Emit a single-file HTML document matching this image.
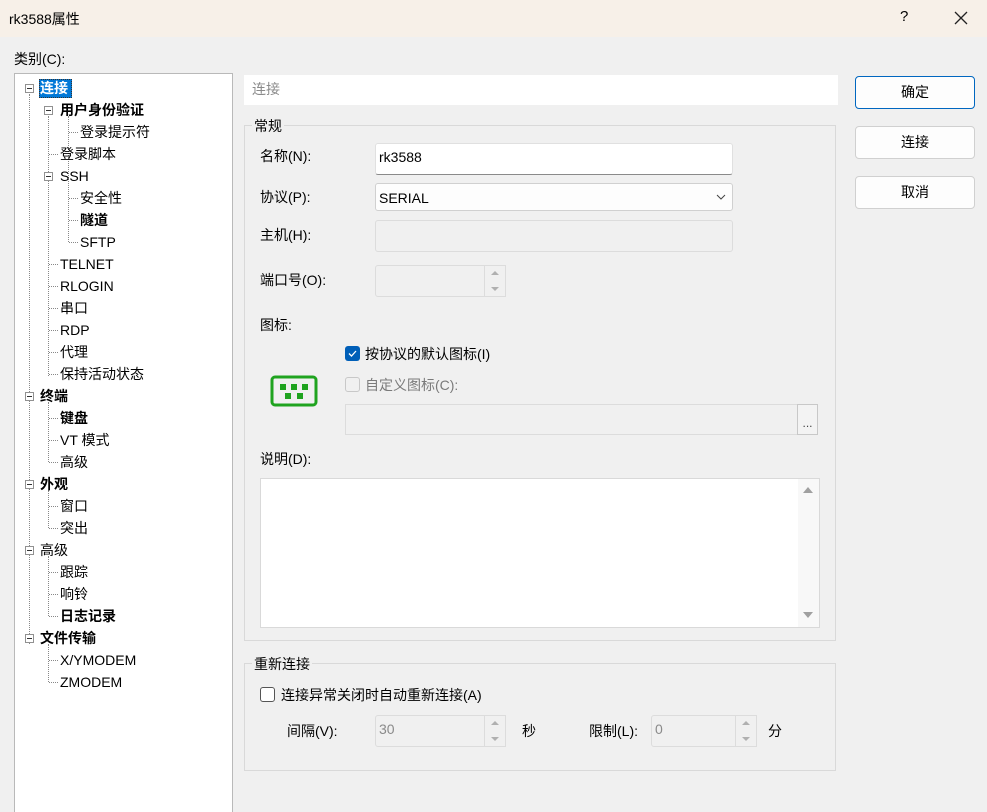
<!DOCTYPE html>
<html><head><meta charset="utf-8"><style>
*{margin:0;padding:0;box-sizing:border-box}
body{width:987px;height:812px;background:#f0f0f0;font-family:"Liberation Sans","Noto Sans CJK SC",sans-serif;font-size:14px;color:#000;position:relative;overflow:hidden}
.a{position:absolute;white-space:nowrap}
.t{position:absolute;line-height:20px;white-space:nowrap}
.b{font-weight:bold}
.box{position:absolute;border:1px solid #d9d9d9}
.pm{position:absolute;width:9px;height:9px;border:1px solid #919191;background:#fff}
.pm:after{content:"";position:absolute;left:1px;top:3px;width:5px;height:1px;background:#333}
.vd{position:absolute;border-left:1px dotted #888;width:0}
.hd{position:absolute;border-top:1px dotted #888;height:0;width:9px}
.btn{position:absolute;left:855px;width:120px;height:33px;background:#fdfdfd;border:1px solid #d0d0d0;border-radius:4px;text-align:center;line-height:31px}
.inp{position:absolute;background:#fff;border:1px solid #e0e0e0;border-bottom:1px solid #8a8a8a;border-radius:3px}
.dis{position:absolute;background:#f0f0f0;border:1px solid #dcdcdc;border-radius:3px}
.gray{color:#6d6d6d}
</style></head><body>
<div class="a" style="left:0;top:0;width:987px;height:37px;background:#f7f0e8"></div>
<div class="a" style="left:9px;top:9px;font-size:14px">rk3588属性</div>
<div class="a" style="left:900px;top:8px;font-size:15px">?</div>
<svg class="a" style="left:954px;top:11px" width="14" height="14"><path d="M1 1L13 13M13 1L1 13" stroke="#222" stroke-width="1.3"/></svg>
<div class="a" style="left:14px;top:49px">类别(C):</div>

<div class="a" style="left:14px;top:73px;width:219px;height:739px;background:#fff;border:1px solid #b9b9b9;border-bottom:none"></div>
<div class="vd" style="left:29px;top:94px;height:550px"></div>
<div class="vd" style="left:48px;top:116px;height:260px"></div>
<div class="vd" style="left:68px;top:116px;height:126px"></div>
<div class="vd" style="left:48px;top:402px;height:60px"></div>
<div class="vd" style="left:48px;top:490px;height:38px"></div>
<div class="vd" style="left:48px;top:556px;height:60px"></div>
<div class="vd" style="left:48px;top:644px;height:38px"></div>
<div class="hd" style="left:69px;top:132px"></div>
<div class="hd" style="left:69px;top:198px"></div>
<div class="hd" style="left:69px;top:220px"></div>
<div class="hd" style="left:69px;top:242px"></div>
<div class="hd" style="left:49px;top:154px"></div>
<div class="hd" style="left:49px;top:264px"></div>
<div class="hd" style="left:49px;top:286px"></div>
<div class="hd" style="left:49px;top:308px"></div>
<div class="hd" style="left:49px;top:330px"></div>
<div class="hd" style="left:49px;top:352px"></div>
<div class="hd" style="left:49px;top:374px"></div>
<div class="hd" style="left:49px;top:418px"></div>
<div class="hd" style="left:49px;top:440px"></div>
<div class="hd" style="left:49px;top:462px"></div>
<div class="hd" style="left:49px;top:506px"></div>
<div class="hd" style="left:49px;top:528px"></div>
<div class="hd" style="left:49px;top:572px"></div>
<div class="hd" style="left:49px;top:594px"></div>
<div class="hd" style="left:49px;top:616px"></div>
<div class="hd" style="left:49px;top:660px"></div>
<div class="hd" style="left:49px;top:682px"></div>
<div class="pm" style="left:25px;top:84px"></div>
<div class="pm" style="left:44px;top:106px"></div>
<div class="pm" style="left:44px;top:172px"></div>
<div class="pm" style="left:25px;top:392px"></div>
<div class="pm" style="left:25px;top:480px"></div>
<div class="pm" style="left:25px;top:546px"></div>
<div class="pm" style="left:25px;top:634px"></div>
<div class="a" style="left:39px;top:79px;width:33px;height:19px;background:#0078d7;border:1px dotted #333"></div>
<div class="t b" style="left:40px;top:78px;color:#fff">连接</div>
<div class="t b" style="left:60px;top:100px">用户身份验证</div>
<div class="t" style="left:80px;top:122px">登录提示符</div>
<div class="t" style="left:60px;top:144px">登录脚本</div>
<div class="t" style="left:60px;top:166px">SSH</div>
<div class="t" style="left:80px;top:188px">安全性</div>
<div class="t b" style="left:80px;top:210px">隧道</div>
<div class="t" style="left:80px;top:232px">SFTP</div>
<div class="t" style="left:60px;top:254px">TELNET</div>
<div class="t" style="left:60px;top:276px">RLOGIN</div>
<div class="t" style="left:60px;top:298px">串口</div>
<div class="t" style="left:60px;top:320px">RDP</div>
<div class="t" style="left:60px;top:342px">代理</div>
<div class="t" style="left:60px;top:364px">保持活动状态</div>
<div class="t b" style="left:40px;top:386px">终端</div>
<div class="t b" style="left:60px;top:408px">键盘</div>
<div class="t" style="left:60px;top:430px">VT 模式</div>
<div class="t" style="left:60px;top:452px">高级</div>
<div class="t b" style="left:40px;top:474px">外观</div>
<div class="t" style="left:60px;top:496px">窗口</div>
<div class="t" style="left:60px;top:518px">突出</div>
<div class="t" style="left:40px;top:540px">高级</div>
<div class="t" style="left:60px;top:562px">跟踪</div>
<div class="t" style="left:60px;top:584px">响铃</div>
<div class="t b" style="left:60px;top:606px">日志记录</div>
<div class="t b" style="left:40px;top:628px">文件传输</div>
<div class="t" style="left:60px;top:650px">X/YMODEM</div>
<div class="t" style="left:60px;top:672px">ZMODEM</div>

<div class="a" style="left:244px;top:75px;width:594px;height:30px;background:#fff"></div>
<div class="t gray" style="left:252px;top:79px;color:#8a8a8a">连接</div>

<div class="btn" style="top:76px;border:1px solid #0067c0">确定</div>
<div class="btn" style="top:126px">连接</div>
<div class="btn" style="top:176px">取消</div>

<div class="box" style="left:244px;top:125px;width:592px;height:516px"></div>
<div class="t" style="left:252px;top:116px;background:#f0f0f0;padding:0 2px">常规</div>
<div class="t" style="left:260px;top:146px">名称(N):</div>
<div class="inp" style="left:375px;top:143px;width:358px;height:32px"></div>
<div class="t" style="left:379px;top:147px">rk3588</div>
<div class="t" style="left:260px;top:187px">协议(P):</div>
<div class="a" style="left:375px;top:183px;width:358px;height:28px;background:#fdfdfd;border:1px solid #d0d0d0;border-radius:3px"></div>
<div class="t" style="left:379px;top:188px">SERIAL</div>
<svg class="a" style="left:716px;top:194px" width="10" height="6"><path d="M1 1L5 5L9 1" stroke="#444" fill="none"/></svg>
<div class="t" style="left:260px;top:225px">主机(H):</div>
<div class="dis" style="left:375px;top:220px;width:358px;height:32px"></div>
<div class="t" style="left:260px;top:270px">端口号(O):</div>
<div class="dis" style="left:375px;top:265px;width:131px;height:32px"></div>
<div class="t" style="left:260px;top:315px">图标:</div>
<div class="a" style="left:345px;top:346px;width:15px;height:15px;background:#005fb8;border-radius:3px"></div>
<svg class="a" style="left:345px;top:346px" width="15" height="15"><path d="M4 7.5L6.5 10L11 5" stroke="#fff" fill="none" stroke-width="1.3"/></svg>
<div class="t" style="left:365px;top:344px">按协议的默认图标(I)</div>
<div class="a" style="left:345px;top:377px;width:15px;height:15px;border:1px solid #c8c8c8;border-radius:3px"></div>
<div class="t gray" style="left:365px;top:375px;color:#7a7a7a">自定义图标(C):</div>
<svg class="a" style="left:270px;top:375px" width="48" height="32"><rect x="2" y="2" width="44" height="28" rx="3" fill="none" stroke="#1fa31f" stroke-width="3"/><rect x="10" y="9" width="6" height="6" fill="#1fa31f"/><rect x="21" y="9" width="6" height="6" fill="#1fa31f"/><rect x="32" y="9" width="6" height="6" fill="#1fa31f"/><rect x="15" y="18" width="6" height="6" fill="#1fa31f"/><rect x="27" y="18" width="6" height="6" fill="#1fa31f"/></svg>
<div class="dis" style="left:345px;top:404px;width:473px;height:31px;border-radius:0"></div>
<div class="a" style="left:797px;top:404px;width:21px;height:31px;background:#f3f3f3;border:1px solid #c8c8c8;text-align:center;font-size:12px;line-height:36px;color:#444">...</div>
<div class="t" style="left:260px;top:449px">说明(D):</div>
<div class="a" style="left:260px;top:478px;width:560px;height:150px;background:#fff;border:1px solid #d9d9d9"></div>
<div class="a" style="left:798px;top:479px;width:21px;height:148px;background:#f8f8f8"></div>
<svg class="a" style="left:802px;top:486px" width="12" height="8"><path d="M1 7L6 1L11 7Z" fill="#a0a0a0"/></svg>
<svg class="a" style="left:802px;top:611px" width="12" height="8"><path d="M1 1L6 7L11 1Z" fill="#a0a0a0"/></svg>

<div class="box" style="left:244px;top:663px;width:592px;height:108px"></div>
<div class="t" style="left:252px;top:654px;background:#f0f0f0;padding:0 2px">重新连接</div>
<div class="a" style="left:260px;top:687px;width:15px;height:15px;border:1px solid #555;border-radius:3px;background:#fff"></div>
<div class="t" style="left:281px;top:685px">连接异常关闭时自动重新连接(A)</div>
<div class="t" style="left:287px;top:721px">间隔(V):</div>
<div class="dis" style="left:375px;top:715px;width:131px;height:32px"></div>
<div class="t gray" style="left:379px;top:719px;color:#8a8a8a">30</div>
<div class="t" style="left:522px;top:721px">秒</div>
<div class="t" style="left:589px;top:721px">限制(L):</div>
<div class="dis" style="left:651px;top:715px;width:106px;height:32px"></div>
<div class="t gray" style="left:655px;top:719px;color:#8a8a8a">0</div>
<div class="t" style="left:768px;top:721px">分</div>
<svg class="a" style="left:484px;top:265px" width="22" height="32"><rect x="0.5" y="0.5" width="21" height="31" fill="#f0f0f0" stroke="#dcdcdc"/><path d="M7 10L11 6L15 10Z M7 22L11 26L15 22Z" fill="#b0b0b0"/></svg>
<svg class="a" style="left:484px;top:715px" width="22" height="32"><rect x="0.5" y="0.5" width="21" height="31" fill="#f0f0f0" stroke="#dcdcdc"/><path d="M7 10L11 6L15 10Z M7 22L11 26L15 22Z" fill="#b0b0b0"/></svg>
<svg class="a" style="left:735px;top:715px" width="22" height="32"><rect x="0.5" y="0.5" width="21" height="31" fill="#f0f0f0" stroke="#dcdcdc"/><path d="M7 10L11 6L15 10Z M7 22L11 26L15 22Z" fill="#b0b0b0"/></svg>
</body></html>
